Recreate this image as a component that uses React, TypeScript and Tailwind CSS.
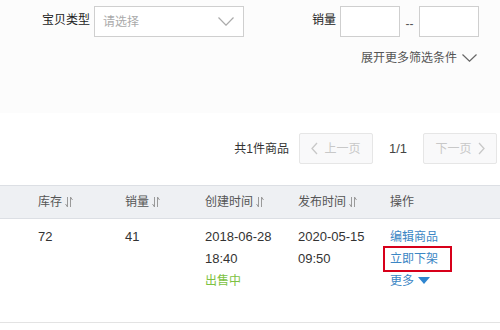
function SortIcon() {
  return (
    <svg width="10" height="12" viewBox="0 0 10 12" className="inline-block ml-[2px] -mt-[2px]" fill="none" stroke="#9a9a9a" strokeWidth="1">
      <path d="M1.5 8 L3.5 11 V1" />
      <path d="M6.5 11 V1 L8.5 4" />
    </svg>
  )
}

function Vee({ w, h, color }: { w: number; h: number; color: string }) {
  return (
    <svg width={w} height={h} viewBox={`0 0 ${w} ${h}`} fill="none" stroke={color} strokeWidth="1.2">
      <path d={`M0.5 0.5 L${w / 2} ${h - 0.8} L${w - 0.5} 0.5`} />
    </svg>
  )
}

function Angle({ dir }: { dir: 'l' | 'r' }) {
  return (
    <svg width="7" height="13" viewBox="0 0 7 13" fill="none" stroke="#c8c8c8" strokeWidth="1.3">
      <path d={dir === 'l' ? 'M6 1 L1 6.5 L6 12' : 'M1 1 L6 6.5 L1 12'} />
    </svg>
  )
}

const cols = 'grid grid-cols-[87px_80px_93px_92px_1fr] pl-[38px]'
const num = 'text-[13px]'

export default function App() {
  return (
    <div className="w-[500px] h-[330px] overflow-hidden bg-white text-[12px] text-[#333]" style={{ fontFamily: '"Liberation Sans", "Noto Sans CJK SC", sans-serif' }}>
      {/* Filters */}
      <div className="h-[113px] bg-[#fcfcfc] pt-[6px]">
        <div className="flex items-start">
          <span className="ml-[42px] mt-[5px] w-[52px] text-[#222]">宝贝类型</span>
          <div className="w-[150px] h-[31px] border border-[#cfcfcf] bg-white flex items-center justify-between pl-[8px] pr-[9px]">
            <span className="text-[#aaa]">请选择</span>
            <Vee w={16} h={9} color="#aaa" />
          </div>
          <span className="ml-[68px] mt-[5px] w-[28px] text-[#222]">销量</span>
          <div className="w-[60px] h-[31px] border border-[#cfcfcf] bg-white" />
          <span className="w-[19px] text-center mt-[9px] text-[#555]">--</span>
          <div className="w-[60px] h-[31px] border border-[#cfcfcf] bg-white" />
        </div>
        <div className="flex justify-end items-center pr-[23px] mt-[12px] text-[#555]">
          <span>展开更多筛选条件</span>
          <span className="ml-[5px]"><Vee w={15} h={8} color="#666" /></span>
        </div>
      </div>

      {/* Pagination */}
      <div className="flex items-center justify-end pr-[3px] pt-[20px] h-[72px] pb-[21px]">
        <span className="mr-[10px]">共1件商品</span>
        <button className="w-[74px] h-[31px] border border-[#e6e6e6] bg-[#f9f9fa] rounded-[2px] flex items-center justify-center gap-[6px] text-[#c8c8c8]">
          <Angle dir="l" />
          上一页
        </button>
        <span className={`w-[50px] text-center text-[#444] ${num}`}>1/1</span>
        <button className="w-[74px] h-[31px] border border-[#e6e6e6] bg-[#f9f9fa] rounded-[2px] flex items-center justify-center gap-[6px] text-[#c8c8c8]">
          下一页
          <Angle dir="r" />
        </button>
      </div>

      {/* Table */}
      <div className={`${cols} h-[34px] items-center bg-[#eef0f3] border-t border-b border-[#dcdfe4] text-[#555]`}>
        <span>库存<SortIcon /></span>
        <span>销量<SortIcon /></span>
        <span>创建时间<SortIcon /></span>
        <span>发布时间<SortIcon /></span>
        <span>操作</span>
      </div>
      <div className={`${cols} pt-[7px] h-[104px] leading-[22px] border-b border-[#e3e3e3]`}>
        <span className={num}>72</span>
        <span className={num}>41</span>
        <div className="flex flex-col">
          <span className={num}>2018-06-28</span>
          <span className={num}>18:40</span>
          <span className="text-[#7dc242]">出售中</span>
        </div>
        <div className="flex flex-col">
          <span className={num}>2020-05-15</span>
          <span className={num}>09:50</span>
        </div>
        <div className="flex flex-col text-[#3b86c4]">
          <span>编辑商品</span>
          <span className="relative w-fit">
            立即下架
            <span className="absolute -left-[7px] -right-[14px] -top-[2px] -bottom-[2px] border-2 border-[#d7001a]" />
          </span>
          <span className="flex items-center">
            更多
            <svg width="12" height="8" viewBox="0 0 12 8" className="ml-[4px]"><path d="M0 0 H12 L6 7 Z" fill="#2f86d0" /></svg>
          </span>
        </div>
      </div>
    </div>
  )
}
